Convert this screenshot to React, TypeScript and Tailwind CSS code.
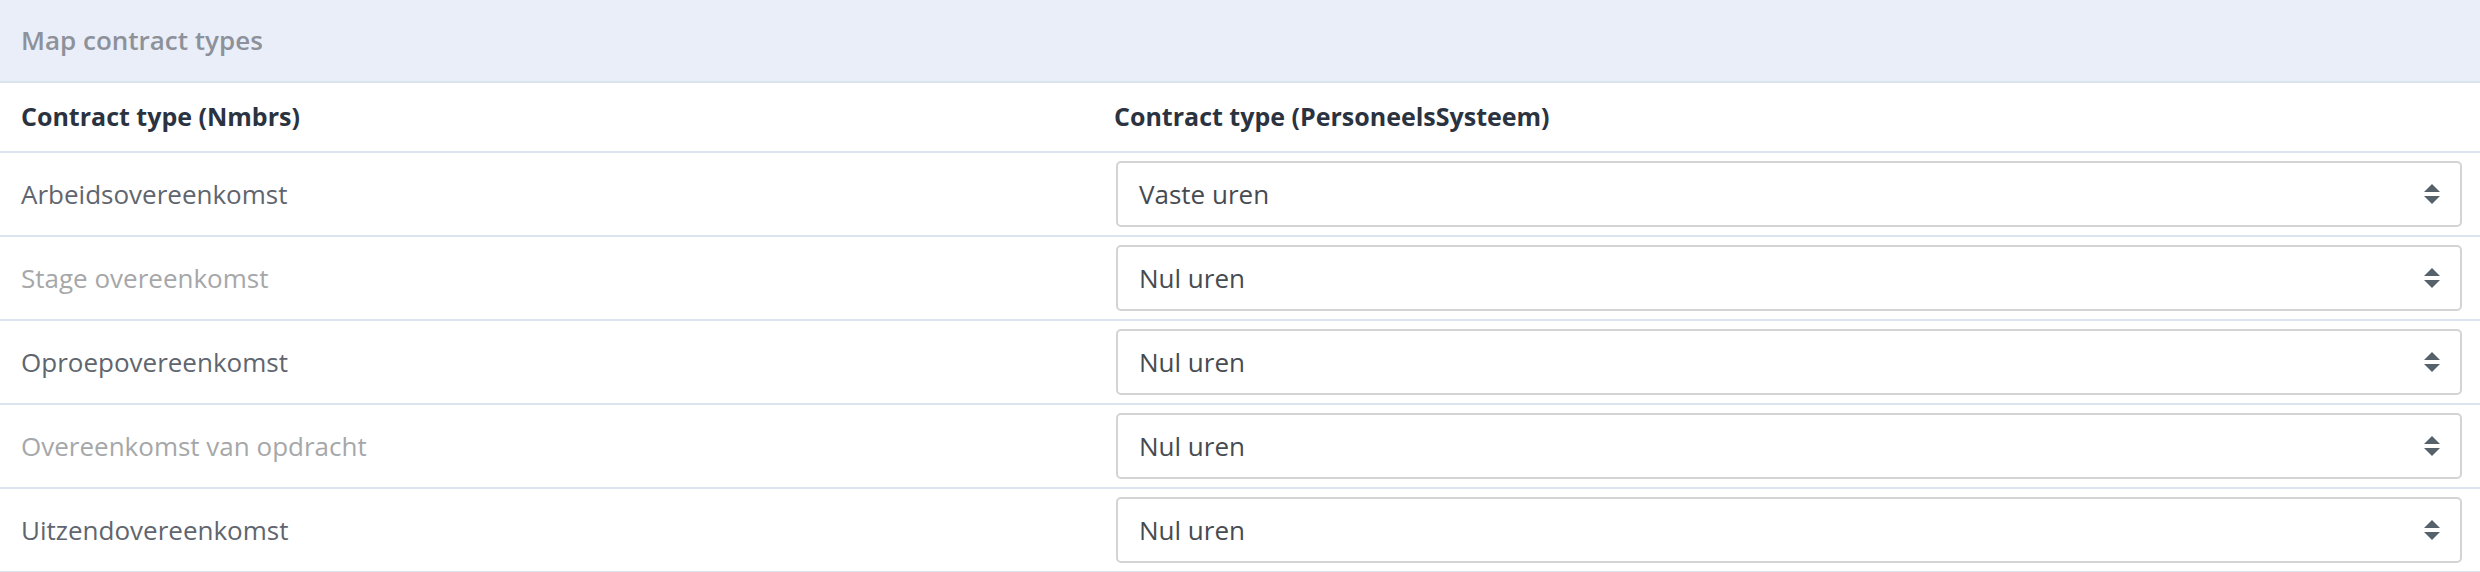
const rows = [
  { name: 'Arbeidsovereenkomst', value: 'Vaste uren', muted: false },
  { name: 'Stage overeenkomst', value: 'Nul uren', muted: true },
  { name: 'Oproepovereenkomst', value: 'Nul uren', muted: false },
  { name: 'Overeenkomst van opdracht', value: 'Nul uren', muted: true },
  { name: 'Uitzendovereenkomst', value: 'Nul uren', muted: false },
];

function SortArrows() {
  return (
    <svg width="16" height="20" viewBox="0 0 16 20" className="shrink-0">
      <path d="M8 0 L16 8 L0 8 Z" fill="#56626b" />
      <path d="M0 12 L16 12 L8 20 Z" fill="#56626b" />
    </svg>
  );
}

export default function App() {
  return (
    <div className="w-[2480px] h-[572px] overflow-hidden bg-white font-['Open_Sans','Liberation_Sans',sans-serif]">
      {/* Title bar */}
      <div className="h-[83px] px-[21px] flex items-center bg-[#e9eef8] border-b-2 border-[#dbe3ef]">
        <h1 className="text-[26px] font-semibold text-[#8d919a]">Map contract types</h1>
      </div>

      {/* Column headers */}
      <div className="grid grid-cols-[1093px_1fr] h-[70px] border-b-2 border-[#dce4f0] items-center">
        <div className="px-[21px] text-[25px] font-bold text-[#2b3341]">Contract type (Nmbrs)</div>
        <div className="px-[21px] text-[25px] font-bold text-[#2b3341]">Contract type (PersoneelsSysteem)</div>
      </div>

      {rows.map((r, i) => (
        <div
          key={i}
          className="grid grid-cols-[1093px_1fr] h-[84px] border-b-2 border-[#dce4f0] items-center"
        >
          <div className={`px-[21px] text-[26px] font-medium ${r.muted ? 'text-[#a6a7a9]' : 'text-[#60656e]'}`}>{r.name}</div>
          <div className="pl-[23px] pr-[18px]">
            <div className="h-[66px] flex items-center justify-between pl-[21px] pr-[20px] border-2 border-[#d4d4d4] rounded-[5px] bg-white">
              <span className="text-[26px] text-[#464b52]">{r.value}</span>
              <SortArrows />
            </div>
          </div>
        </div>
      ))}
    </div>
  );
}
